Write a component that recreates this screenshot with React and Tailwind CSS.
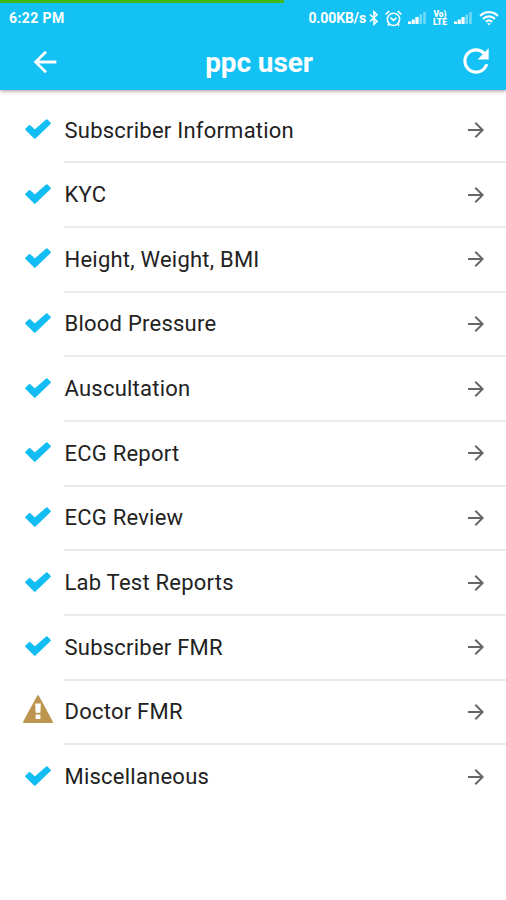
import React from "react";
import { MdArrowBack, MdArrowForward, MdRefresh } from "react-icons/md";

const sections = [
    { name: "Subscriber Information", status: "done" },
    { name: "KYC", status: "done" },
    { name: "Height, Weight, BMI", status: "done" },
    { name: "Blood Pressure", status: "done" },
    { name: "Auscultation", status: "done" },
    { name: "ECG Report", status: "done" },
    { name: "ECG Review", status: "done" },
    { name: "Lab Test Reports", status: "done" },
    { name: "Subscriber FMR", status: "done" },
    { name: "Doctor FMR", status: "warning" },
    { name: "Miscellaneous", status: "done" },
];

function CheckIcon() {
    return (
        <svg viewBox="0 0 26 20" className="w-[26px] h-5">
            <path d="M1.2 10.2 4.6 7 9.8 11.8 21.8 1.3 24.9 4.4 9.8 18.8Z" fill="#12bdf3" stroke="#12bdf3" strokeWidth="2" strokeLinejoin="round" />
        </svg>
    );
}

function WarningIcon() {
    return (
        <svg viewBox="0 0 30 28" className="w-[30px] h-7 mb-[3px]">
            <path d="M15 1.2 28.9 27H1.1Z" fill="#bd954f" stroke="#bd954f" strokeWidth="2" strokeLinejoin="round" />
            <path d="M12.2 8.5h5.6l-.4 9.2h-4.8zM12.6 19.6h4.8V24h-4.8z" fill="#fff" />
        </svg>
    );
}

function BluetoothIcon() {
    return (
        <svg viewBox="0 0 10 16" className="w-2.5 h-4" fill="none" stroke="#fff" strokeWidth="1.6">
            <path d="M1 4.5 8 11.2 5 14.2V1.8L8 4.8 1 11.5" />
        </svg>
    );
}

function AlarmIcon() {
    return (
        <svg viewBox="0 0 16 16" className="w-[17px] h-[17px]" fill="none" stroke="#fff" strokeWidth="1.5">
            <circle cx="8" cy="8.8" r="5.8" />
            <path d="M.6 4.2 4 1.1M15.4 4.2 12 1.1M5.2 7.2 8 9.8l2.7-2.4M4.2 13l-1.5 1.7M11.8 13l1.5 1.7" />
        </svg>
    );
}

function SignalIcon() {
    return (
        <svg viewBox="0 0 18 12" className="w-[18px] h-3" fill="#fff">
            <path d="M0 9.5h3.2V12H0zM3.8 7.5h3V12h-3zM7.4 5h3.2v7H7.4z" />
            <path d="M11.4 2.6h2.6V12h-2.6zM15.2 0h2.6v12h-2.6z" opacity=".4" />
        </svg>
    );
}

function WifiIcon() {
    return (
        <svg viewBox="0 0 20 16" className="w-5 h-4" fill="none" stroke="#fff" strokeWidth="2.2">
            <path d="M1.2 6C6 .9 14 .9 18.8 6M4 9c3.4-3.5 8.6-3.5 12 0M6.8 11.8c1.9-1.8 4.5-1.8 6.4 0" />
            <path d="M8 13.2h4L10 15.5z" fill="#fff" stroke="none" />
        </svg>
    );
}

function StatusBar() {
    return (
        <div className="flex items-center justify-between h-[30px] pt-[2px] pl-[9px] pr-[7px] text-sm font-bold">
            <span className="tracking-[0.4px]">6:22 PM</span>
            <div className="flex items-center">
                <span className="whitespace-nowrap tracking-[-0.1px]">0.00KB/s</span>
                <div className="flex ml-[3px]"><BluetoothIcon /></div>
                <div className="flex ml-[6px]"><AlarmIcon /></div>
                <div className="flex ml-[6px]"><SignalIcon /></div>
                <div className="ml-[6px] w-4 text-center text-[8.5px] leading-none font-black">
                    <div>Vo)</div>
                    <div>LTE</div>
                </div>
                <div className="flex ml-[6px]"><SignalIcon /></div>
                <div className="flex ml-[7px]"><WifiIcon /></div>
            </div>
        </div>
    );
}

function App() {
    return (
        <div className="w-full h-[900px] overflow-hidden bg-white font-[Roboto,sans-serif]">
            <header className="relative h-[90px] bg-[#14c1f5] text-white shadow-[0_1px_4px_rgba(80,50,40,0.5)]">
                {/* Loading progress */}
                <div className="h-[2px]">
                    <div className="w-[284px] h-[2.5px] bg-[#43b916]" />
                </div>
                <StatusBar />
                <div className="flex items-center justify-between h-[60px] pl-7 pr-[11px]">
                    <button className="w-[38px]"><MdArrowBack size={34} /></button>
                    <h1 className="text-[28px] leading-8 font-bold pt-[2px] pr-[5px] tracking-[-0.1px]">ppc user</h1>
                    <button className="pb-[3px]"><MdRefresh size={38} /></button>
                </div>
            </header>

            {/* Report sections */}
            <ul className="pt-[8.7px]">
                {sections.map((section) => (
                    <li key={section.name} className="group flex h-[64.67px]">
                        <div className="w-16 shrink-0 flex items-center justify-center pr-[1px] pl-3 pb-1">
                            {section.status === "done" ? <CheckIcon /> : <WarningIcon />}
                        </div>
                        <div className="flex flex-1 items-center justify-between pl-[0.5px] pr-[18px] border-b-2 border-[#ebebeb] group-last:border-transparent">
                            <span className="text-[22px] tracking-[0.23px] text-[#222]">{section.name}</span>
                            <MdArrowForward size={24} className="text-[#666]" />
                        </div>
                    </li>
                ))}
            </ul>
        </div>
    );
}

export default App;
